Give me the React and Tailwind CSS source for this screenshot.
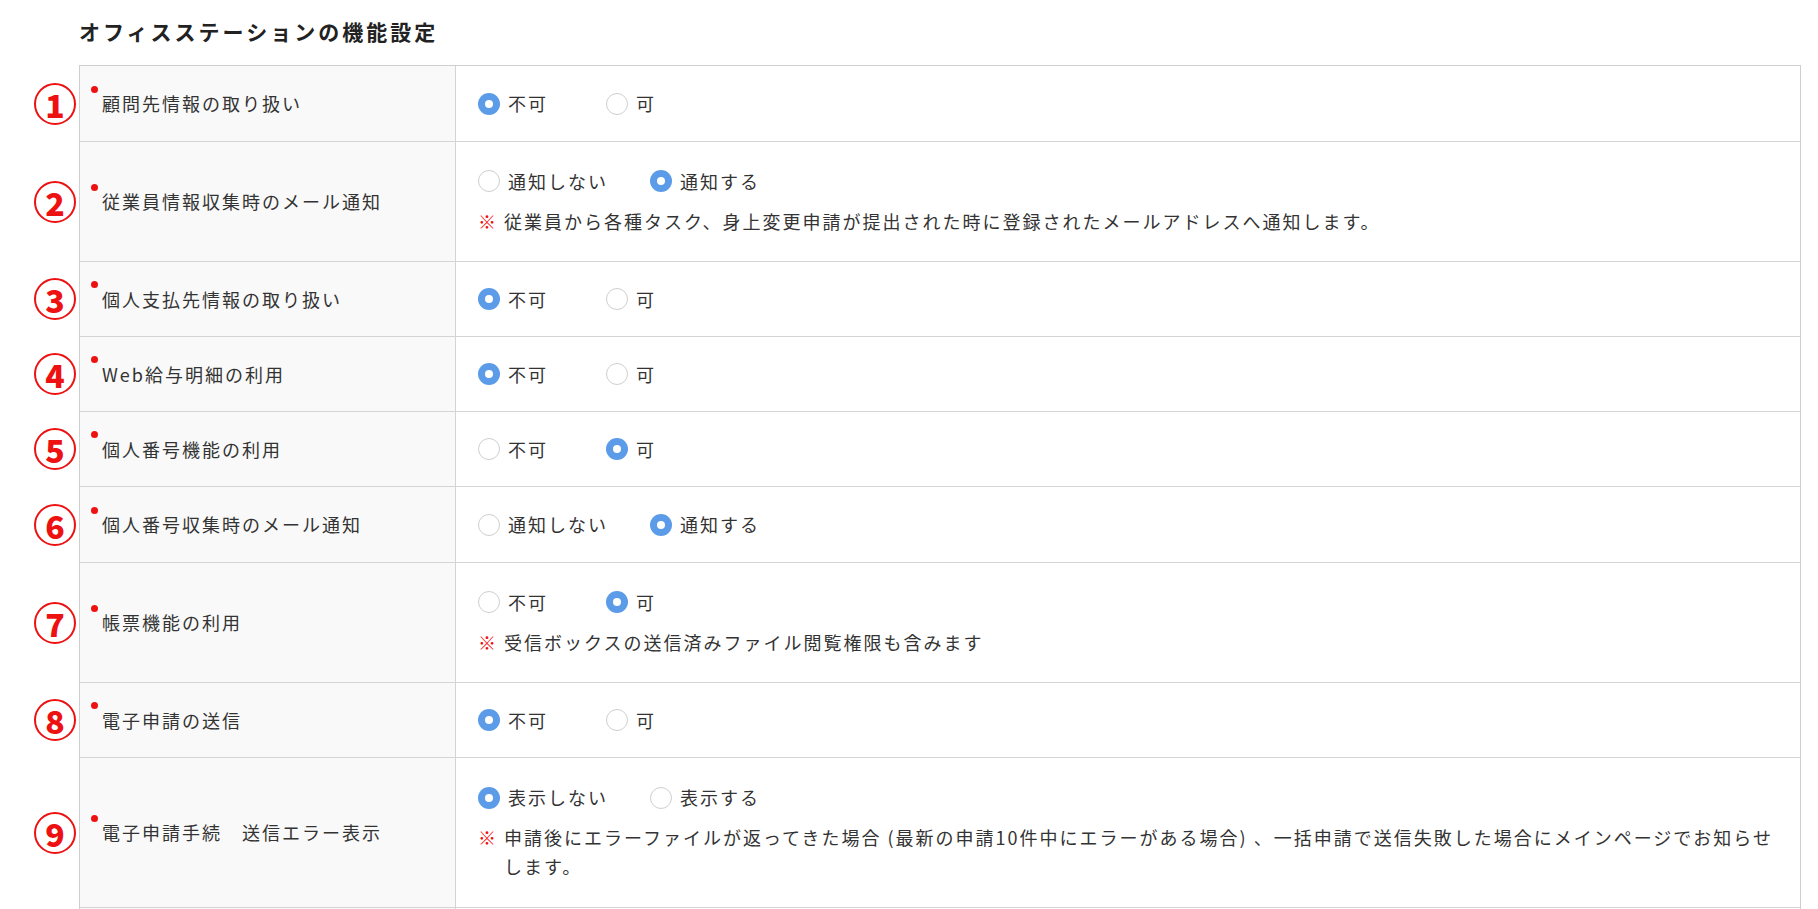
const rows = [
  { label: "顧問先情報の取り扱い", opts: [["不可", true, 128], ["可", false, 128]], h: 76 },
  { label: "従業員情報収集時のメール通知", opts: [["通知しない", false, 172], ["通知する", true, 128]], h: 120, note: "従業員から各種タスク、身上変更申請が提出された時に登録されたメールアドレスへ通知します。" },
  { label: "個人支払先情報の取り扱い", opts: [["不可", true, 128], ["可", false, 128]], h: 75 },
  { label: "Web給与明細の利用", opts: [["不可", true, 128], ["可", false, 128]], h: 75 },
  { label: "個人番号機能の利用", opts: [["不可", false, 128], ["可", true, 128]], h: 75 },
  { label: "個人番号収集時のメール通知", opts: [["通知しない", false, 172], ["通知する", true, 128]], h: 76 },
  { label: "帳票機能の利用", opts: [["不可", false, 128], ["可", true, 128]], h: 120, note: "受信ボックスの送信済みファイル閲覧権限も含みます" },
  { label: "電子申請の送信", opts: [["不可", true, 128], ["可", false, 128]], h: 75 },
  { label: "電子申請手続　送信エラー表示", opts: [["表示しない", true, 172], ["表示する", false, 128]], h: 150, note: "申請後にエラーファイルが返ってきた場合 (最新の申請10件中にエラーがある場合) 、一括申請で送信失敗した場合にメインページでお知らせします。" },
];

function Radio({ on }) {
  return on ? (
    <span className="w-[22px] h-[22px] rounded-full bg-[#5b9be8] flex items-center justify-center shrink-0">
      <span className="w-[8px] h-[8px] rounded-full bg-white" />
    </span>
  ) : (
    <span className="w-[22px] h-[22px] rounded-full border border-[#cfcfcf] bg-white shrink-0" />
  );
}

export default function App() {
  return (
    <div className="w-[1818px] h-[909px] overflow-hidden bg-white text-[#333] relative" style={{ fontFamily: '"Noto Sans CJK JP", "Noto Sans", sans-serif' }}>
      <h1 className="absolute left-[79px] top-[16px] text-[21px] tracking-[3px] font-bold text-[#222]">オフィスステーションの機能設定</h1>
      <div className="absolute left-[79px] top-[65px] w-[1722px] border-t border-l border-r border-[#cfcfcf]">
        {rows.map((r, i) => (
          <div key={i} className="flex border-b border-[#d4d4d4] relative" style={{ height: r.h }}>
            <div className="absolute left-[-46px] top-1/2 -translate-y-1/2 w-[42px] h-[42px] rounded-full border-2 border-[#ee1111] bg-white flex items-center justify-center text-[#ee1111] text-[32px] font-black leading-none">{i + 1}</div>
            <div className="w-[376px] shrink-0 bg-[#f9f9f9] border-r border-[#d4d4d4] flex items-center pl-[11px] relative">
              <span className="absolute w-[7px] h-[7px] rounded-full bg-[#ee1111] left-[11px] top-1/2 -translate-y-[18px]" />
              <span className="pl-[11px] text-[18px] tracking-[2px]">{r.label}</span>
            </div>
            <div className="flex-1 flex flex-col justify-center pl-[22px] pr-[20px]">
              <div className="flex items-center">
                {r.opts.map(([t, on, w]) => (
                  <div key={t} className="flex items-center gap-[8px]" style={{ width: w }}>
                    <Radio on={on} />
                    <span className="text-[18px] tracking-[2px]">{t}</span>
                  </div>
                ))}
              </div>
              {r.note && (
                <div className="mt-[12px] flex text-[18px] tracking-[2px] leading-[29px]">
                  <span className="text-[#ee1111] font-bold mr-[6px] shrink-0">※</span>
                  <span>{r.note}</span>
                </div>
              )}
            </div>
          </div>
        ))}
        <div className="flex h-[40px]">
          <div className="w-[376px] bg-[#f9f9f9] border-r border-[#d4d4d4]" />
        </div>
      </div>
    </div>
  );
}
